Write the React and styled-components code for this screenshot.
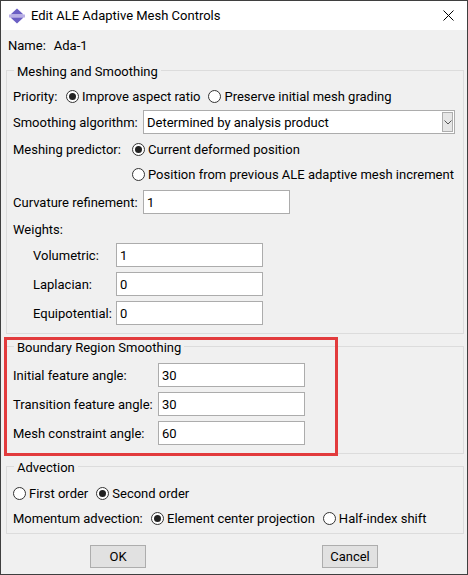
import React from 'react';
import styled, { createGlobalStyle } from 'styled-components';

const GlobalStyle = createGlobalStyle`
  html, body {
    margin: 0;
    padding: 0;
    background: #f0f0f0;
  }
  body {
    font-family: Roboto, "Liberation Sans", sans-serif;
    font-size: 13px;
    color: #000;
  }
`;

const Window = styled.div`
  width: 468px;
  height: 575px;
  box-sizing: border-box;
  border: 1px solid #3f3f3f;
  background: #f0f0f0;
  display: flex;
  flex-direction: column;
  overflow: hidden;
`;

const TitleBar = styled.div`
  height: 29px;
  flex-shrink: 0;
  background: #fff;
  display: flex;
  align-items: center;
  padding-left: 8px;
`;

const TitleText = styled.span`
  margin-left: 6px;
`;

const CloseBox = styled.span`
  margin-left: auto;
  margin-right: 13px;
  display: flex;
`;

const Body = styled.div`
  padding: 0 3px 0 5px;
  display: flex;
  flex-direction: column;
`;

const NameRow = styled.div`
  margin-top: 6px;
  height: 18px;
  padding-left: 2px;
  display: flex;
  align-items: center;
  gap: 8px;
`;

const Group = styled.fieldset`
  margin: ${(p) => p.$mt || 0}px 0 0;
  padding: ${(p) => p.$pt}px 6px ${(p) => p.$pb}px;
  border: 1px solid #dcdcdc;
  min-width: 0;
`;

const Legend = styled.legend`
  padding: 4px 3px 0;
  margin-left: 1px;
  line-height: 16px;
`;

const HighlightWrap = styled.div`
  position: relative;
  margin-top: 2px;
`;

const Marker = styled.div`
  position: absolute;
  top: 1px;
  left: -2px;
  width: 334px;
  height: 119px;
  box-sizing: border-box;
  border: 3px solid #e23b3d;
  pointer-events: none;
`;

const Row = styled.div`
  display: flex;
  align-items: center;
  height: ${(p) => p.$h || 24}px;
  margin-top: ${(p) => p.$mt || 0}px;
  padding-left: ${(p) => p.$indent || 0}px;
  white-space: nowrap;
`;

const Label = styled.span`
  width: ${(p) => (p.$w ? `${p.$w}px` : 'auto')};
  flex-shrink: 0;
`;

const Option = styled.span`
  display: inline-flex;
  align-items: center;
  gap: 3px;
  margin-right: 8px;
`;

const RadioDot = styled.span`
  width: 13px;
  height: 13px;
  box-sizing: border-box;
  border-radius: 50%;
  border: 1px solid #333;
  background: #fff;
  display: inline-flex;
  align-items: center;
  justify-content: center;
  flex-shrink: 0;
  &::after {
    content: '';
    width: 7px;
    height: 7px;
    border-radius: 50%;
    background: ${(p) => (p.$on ? '#222' : 'transparent')};
  }
`;

const TextBox = styled.div`
  width: 147px;
  height: 24px;
  box-sizing: border-box;
  border: 1px solid #acacac;
  background: #fff;
  padding: 0 3px;
  display: flex;
  align-items: center;
`;

const Select = styled.div`
  width: 312px;
  height: 24px;
  box-sizing: border-box;
  border: 1px solid #acacac;
  background: #fff;
  display: flex;
  align-items: center;
  padding: 1px 1px 1px 3px;
`;

const SelectValue = styled.span`
  flex: 1;
`;

const DropButton = styled.span`
  width: 11px;
  height: 20px;
  box-sizing: border-box;
  border: 1px solid #adadad;
  background: #e6e6e6;
  display: flex;
  align-items: center;
  justify-content: center;
`;

const ButtonRow = styled.div`
  margin-top: 11px;
  padding-left: 84px;
  display: flex;
  gap: 176px;
`;

const Button = styled.button`
  width: 56px;
  height: 23px;
  box-sizing: border-box;
  border: 1px solid #adadad;
  background: #e1e1e1;
  font: inherit;
  color: #000;
  padding: 0;
`;

const Radio = ({ on, children }) => (
  <Option>
    <RadioDot $on={on} />
    {children}
  </Option>
);

const AppIcon = () => (
  <svg width="16" height="16" viewBox="0 0 16 16">
    <polygon points="8,0.5 14.5,6.5 1.5,6.5" fill="#6b5fc4" />
    <rect x="0" y="6.5" width="16" height="3" fill="#b9b0e6" />
    <polygon points="1.5,9.5 14.5,9.5 8,15.5" fill="#6b5fc4" />
  </svg>
);

const CloseIcon = () => (
  <svg width="11" height="11" viewBox="0 0 11 11">
    <path d="M0.5 0.5 L10.5 10.5 M10.5 0.5 L0.5 10.5" stroke="#000" strokeWidth="1" />
  </svg>
);

const Chevron = () => (
  <svg width="8" height="5" viewBox="0 0 8 5">
    <path d="M0.5 0.5 L4 4 L7.5 0.5" stroke="#555" strokeWidth="1" fill="none" />
  </svg>
);

export default function App() {
  return (
    <Window>
      <GlobalStyle />
      <TitleBar>
        <AppIcon />
        <TitleText>Edit ALE Adaptive Mesh Controls</TitleText>
        <CloseBox>
          <CloseIcon />
        </CloseBox>
      </TitleBar>
      <Body>
        <NameRow>
          <span>Name:</span>
          <span>Ada-1</span>
        </NameRow>

        <Group $mt={6} $pt={4} $pb={8}>
          <Legend>Meshing and Smoothing</Legend>
          <Row>
            <Label $w={53}>Priority:</Label>
            <Radio on>Improve aspect ratio</Radio>
            <Radio>Preserve initial mesh grading</Radio>
          </Row>
          <Row $mt={2}>
            <Label $w={130}>Smoothing algorithm:</Label>
            <Select>
              <SelectValue>Determined by analysis product</SelectValue>
              <DropButton>
                <Chevron />
              </DropButton>
            </Select>
          </Row>
          <Row $mt={3}>
            <Label $w={119}>Meshing predictor:</Label>
            <Radio on>Current deformed position</Radio>
          </Row>
          <Row $mt={1} $indent={119}>
            <Radio>Position from previous ALE adaptive mesh increment</Radio>
          </Row>
          <Row $mt={4}>
            <Label $w={130}>Curvature refinement:</Label>
            <TextBox>1</TextBox>
          </Row>
          <Row $mt={3}>
            <Label>Weights:</Label>
          </Row>
          <Row $mt={2} $indent={20}>
            <Label $w={83}>Volumetric:</Label>
            <TextBox>1</TextBox>
          </Row>
          <Row $mt={5} $indent={20}>
            <Label $w={83}>Laplacian:</Label>
            <TextBox>0</TextBox>
          </Row>
          <Row $mt={5} $indent={20}>
            <Label $w={83}>Equipotential:</Label>
            <TextBox>0</TextBox>
          </Row>
        </Group>

        <HighlightWrap>
          <Group $pt={7} $pb={8}>
            <Legend>Boundary Region Smoothing</Legend>
            <Row>
              <Label $w={145}>Initial feature angle:</Label>
              <TextBox>30</TextBox>
            </Row>
            <Row $mt={5}>
              <Label $w={145}>Transition feature angle:</Label>
              <TextBox>30</TextBox>
            </Row>
            <Row $mt={5}>
              <Label $w={145}>Mesh constraint angle:</Label>
              <TextBox>60</TextBox>
            </Row>
          </Group>
          <Marker />
        </HighlightWrap>

        <Group $mt={2} $pt={7} $pb={5}>
          <Legend>Advection</Legend>
          <Row $h={20}>
            <Radio>First order</Radio>
            <Radio on>Second order</Radio>
          </Row>
          <Row $h={20} $mt={5}>
            <Label $w={138}>Momentum advection:</Label>
            <Radio on>Element center projection</Radio>
            <Radio>Half-index shift</Radio>
          </Row>
        </Group>

        <ButtonRow>
          <Button>OK</Button>
          <Button>Cancel</Button>
        </ButtonRow>
      </Body>
    </Window>
  );
}
